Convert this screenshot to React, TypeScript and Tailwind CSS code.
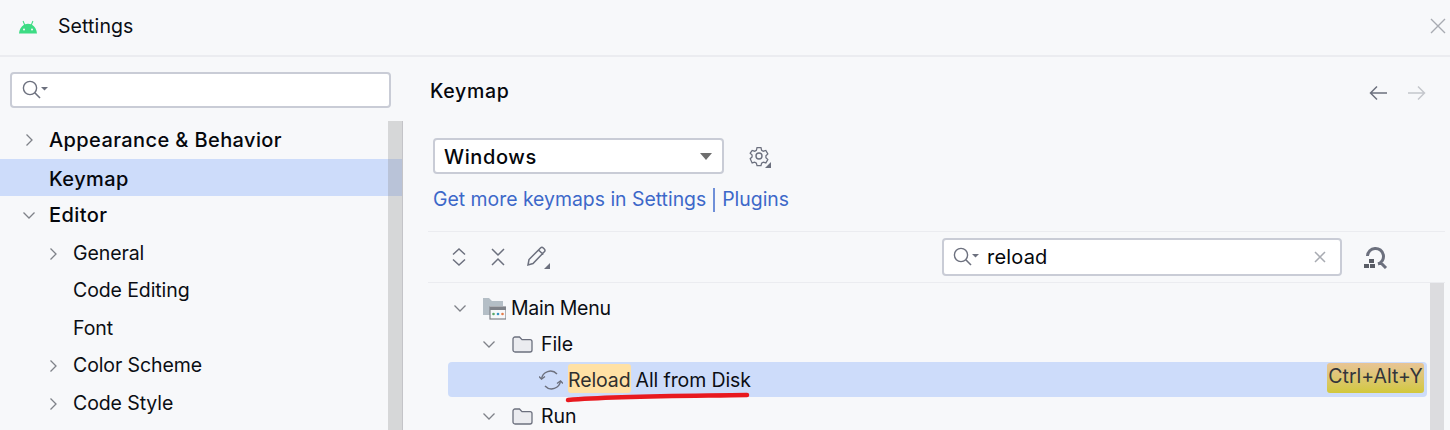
import React from 'react';

const font = { fontFamily: 'Inter, "Noto Sans", sans-serif' };

const Chevron = ({ open, className = '' }: { open?: boolean; className?: string }) => (
  <svg width="16" height="16" viewBox="0 0 16 16" fill="none" stroke="#7f8289" strokeWidth="1.3" className={className}>
    {open ? <path d="M2.5 5.5 8 11l5.5-5.5" /> : <path d="M5.5 2.5 11 8l-5.5 5.5" />}
  </svg>
);

const SearchIcon = () => (
  <svg width="28" height="22" viewBox="0 0 28 22" fill="none" className="shrink-0">
    <circle cx="9" cy="9" r="6.6" stroke="#6c707e" strokeWidth="1.4" />
    <path d="M13.8 13.8 19 19" stroke="#6c707e" strokeWidth="1.6" />
    <path d="M20 8h7l-3.5 3.6z" fill="#6c707e" />
  </svg>
);

const Corner = () => <span className="absolute right-0 bottom-0 w-0 h-0 border-l-[6px] border-l-transparent border-b-[6px] border-b-[#6c707e]" />;

const Folder = () => (
  <svg width="21" height="19" viewBox="0 0 21 19" fill="#ebecf0" stroke="#6c707e" strokeWidth="1.3" className="shrink-0">
    <path d="M1 4a2 2 0 0 1 2-2h4.500l2.500 2.600h8a2 2 0 0 1 2 2V15a2 2 0 0 1-2 2H3a2 2 0 0 1-2-2z" />
  </svg>
);

const SideRow = ({ label, depth, arrow, selected }: { label: string; depth: 0 | 1; arrow?: 'open' | 'closed'; selected?: boolean }) => (
  <div className={`flex items-center odd:h-[38px] even:h-[37px] even:pt-[2px] ${selected ? 'bg-[#cddcfa]' : ''} ${depth === 0 ? 'pl-[21px] font-medium tracking-[0.4px]' : 'odd:pt-[2px] pl-[45px] tracking-[-0.1px]'}`}>
    <span className="w-[28px] shrink-0">{arrow && <Chevron open={arrow === 'open'} />}</span>
    <span className={depth === 0 ? 'text-[20px] text-[#05070c]' : 'text-[19.5px] text-[#0b0e14]'}>{label}</span>
  </div>
);

export default function App() {
  return (
    <div className="w-[1450px] h-[430px] overflow-hidden bg-[#f7f8fa] text-[#0b0e14] flex flex-col" style={font}>
      {/* title bar */}
      <header className="h-[57px] shrink-0 border-b-2 border-[#ebecf0] flex items-center pl-[19px] pr-[4px]">
        <svg width="18" height="14" viewBox="0 0 18 14" fill="#3ddc84" className="shrink-0 mt-[-2px]">
          <path d="M0 13.5C.3 9.6 2.2 6.4 5 4.8L3.6 1.2l.9-.4L6 4.3a8.6 8.6 0 0 1 6 0L13.500.8l.9.4L13 4.800c2.800 1.600 4.700 4.800 5 8.700z" />
          <circle cx="5" cy="9.500" r="1" fill="#f7f8fa" />
          <circle cx="13" cy="9.500" r="1" fill="#f7f8fa" />
        </svg>
        <span className="ml-[21px] text-[19.500px] tracking-[0.1px] mt-[-2px]">Settings</span>
        <svg width="16" height="16" viewBox="0 0 16 16" stroke="#a8abb2" strokeWidth="1.400" className="ml-auto mt-[-3px]">
          <path d="M1 1l14 14M15 1 1 15" />
        </svg>
      </header>

      <div className="flex flex-1 min-h-0">
        {/* left tree */}
        <aside className="w-[403px] shrink-0 relative">
          <div className="mx-[10px] mt-[15px] h-[36px] w-[381px] bg-white border-2 border-[#c9ccd6] rounded-[4px] flex items-center pl-[9px]">
            <SearchIcon />
          </div>
          <div className="mt-[13px]">
            <SideRow label="Appearance & Behavior" depth={0} arrow="closed" />
            <SideRow label="Keymap" depth={0} selected />
            <SideRow label="Editor" depth={0} arrow="open" />
            <SideRow label="General" depth={1} arrow="closed" />
            <SideRow label="Code Editing" depth={1} />
            <SideRow label="Font" depth={1} />
            <SideRow label="Color Scheme" depth={1} arrow="closed" />
            <SideRow label="Code Style" depth={1} arrow="closed" />
          </div>
          {/* scrollbar */}
          <div className="absolute left-[388px] top-[64px] bottom-0 w-[15px] bg-[#8c8c8c]/30 border-r border-[#c4c4c8]" />
        </aside>

        {/* right content */}
        <main className="flex-1 min-w-0 relative">
          <div className="flex items-center h-[26px] mt-[21px] pl-[27px] pr-[24px]">
            <h1 className="text-[19.500px] font-medium tracking-[0.7px] text-[#05070c] mt-[2px]">Keymap</h1>
            <div className="ml-auto flex items-center gap-[21px] mt-[3px]">
              <svg width="18" height="16" viewBox="0 0 18 16" fill="none" stroke="#6c707e" strokeWidth="1.500"><path d="M18 8H1.500M8 1.500 1.500 8 8 14.500" /></svg>
              <svg width="18" height="16" viewBox="0 0 18 16" fill="none" stroke="#c4c6cc" strokeWidth="1.500"><path d="M0 8h16.500M10 1.500 16.500 8 10 14.500" /></svg>
            </div>
          </div>

          <div className="flex items-center mt-[34px] pl-[30px]">
            <div className="w-[291px] h-[36px] bg-white border-2 border-[#c9ccd6] rounded-[4px] flex items-center pl-[9px] pr-[10px]">
              <span className="text-[20px] font-medium tracking-[0.6px] text-[#05070c] mt-[2px]">Windows</span>
              <span className="ml-auto w-0 h-0 border-x-[6.500px] border-x-transparent border-t-[7px] border-t-[#6e6e6e]" />
            </div>
            <span className="relative ml-[23px] w-[24px] h-[24px] flex items-center justify-center">
              <svg width="22" height="22" viewBox="0 0 22 22" fill="none" stroke="#6c707e" strokeWidth="1.400">
                <path d="M8.800 1.800h4.400l.7 2.800 1.900 1.100 2.800-.8 2.200 3.800-2.100 2 0 2.200 2.100 2-2.200 3.800-2.800-.8-1.900 1.100-.7 2.800H8.800l-.7-2.800-1.900-1.100-2.800.8L1.200 14l2.100-2v-2.200l-2.100-2L3.400 4.900l2.800.8 1.900-1.100z" transform="translate(1.100 1.100) scale(.9)" />
                <circle cx="11" cy="11" r="3" />
              </svg>
              <Corner />
            </span>
          </div>

          <div className="flex items-center mt-[11px] pl-[30px] h-[30px] text-[19.400px] text-[#3d68c9]">
            <span>Get more keymaps in Settings</span>
            <span className="mx-[7px] w-[2px] h-[24px] bg-[#6f8fd8]" />
            <span>Plugins</span>
          </div>

          <div className="ml-[25px] mr-[5px] mt-[16px] h-[52px] border-y border-[#ebecf0] flex items-center pl-[22px] pr-[57px]">
            <svg width="18" height="20" viewBox="0 0 18 20" fill="none" stroke="#6c707e" strokeWidth="1.500" className="shrink-0">
              <path d="M3 7.500 9 2l6 5.500M3 12.500 9 18l6-5.500" />
            </svg>
            <svg width="18" height="20" viewBox="0 0 18 20" fill="none" stroke="#6c707e" strokeWidth="1.500" className="shrink-0 ml-[21px]">
              <path d="M3 2 9 8l6-6M3 18l6-6 6 6" />
            </svg>
            <span className="relative ml-[19px] w-[24px] h-[24px] shrink-0">
              <svg width="22" height="22" viewBox="0 0 22 22" fill="none" stroke="#6c707e" strokeWidth="1.500">
                <path d="M2 20l1-5.500L14.500 3a2 2 0 0 1 2.800 0l1 1a2 2 0 0 1 0 2.800L7 18.500zM12.500 5l4.800 4.500" />
              </svg>
              <Corner />
            </span>
            <div className="ml-auto w-[400px] h-[38px] bg-white border-2 border-[#c9ccd6] rounded-[4px] flex items-center pl-[8px] pr-[14px] mb-[1px]">
              <SearchIcon />
              <span className="ml-[7px] text-[20px] tracking-[0.2px] text-[#05070c]">reload</span>
              <svg width="12" height="12" viewBox="0 0 12 12" stroke="#a8abb2" strokeWidth="1.500" className="ml-auto"><path d="M1 1l10 10M11 1 1 11" /></svg>
            </div>
            <svg width="24" height="24" viewBox="0 0 24 24" fill="none" className="ml-[22px] shrink-0">
              <path d="M3.500 11a8 8 0 1 1 10.500 8M15.500 16.500 22 23" stroke="#6c707e" strokeWidth="3" />
              <path d="M5 14h5v4H5zM0 19h5v4H0zM6 19h5v4H6z" fill="#5a5d66" />
            </svg>
          </div>

          {/* keymap tree */}
          <div className="relative mt-[7px] pl-[45px] text-[19.500px] tracking-[-0.1px]">
            <div className="h-[36px] flex items-center pl-[2px]">
              <Chevron open className="ml-[2px]" />
              <svg width="24" height="24" viewBox="0 0 24 24" className="ml-[14px] shrink-0">
                <path d="M1 2h6l3 3h11v5H8v9H1z" fill="#b4bec6" />
                <rect x="8" y="11" width="16" height="12" fill="#f7f8fa" stroke="#7f8289" strokeWidth="1.200" />
                <rect x="8" y="11" width="16" height="3" fill="#7f8289" />
                <circle cx="11.500" cy="18" r="1.300" fill="#59a869" />
                <circle cx="16" cy="18" r="1.300" fill="#3592c4" />
                <circle cx="20.500" cy="18" r="1.300" fill="#e57c4a" />
              </svg>
              <span className="ml-[5px] tracking-[-0.3px] mt-[2px]">Main Menu</span>
            </div>
            <div className="h-[36px] flex items-center pl-[33px]">
              <Chevron open />
              <span className="ml-[15px]"><Folder /></span>
              <span className="ml-[8px] mt-[2px]">File</span>
            </div>
            <div className="h-[35px] mb-[1px] mr-[23px] bg-[#cddcfa] rounded-[4px] flex items-center pl-[91px] pr-[3px]">
              <svg width="24" height="22" viewBox="0 0 24 22" fill="none" stroke="#6c707e" strokeWidth="1.400" className="shrink-0">
                <path d="M2.500 10A9 9 0 0 1 18 5M21.500 12A9 9 0 0 1 6 17" />
                <path d="M0 7.500 2.500 10 6 7.500M18 14.500l3.500-2.500 2.500 2.500" />
              </svg>
              <span className="ml-[5px] h-[29px] mb-[2px] pt-[4px] flex items-center bg-[#ffe1a5] rounded-[3px] text-[#2f2f2f]">Reload</span>
              <span className="ml-[5px] mt-[2px]">All from Disk</span>
              <span className="ml-auto h-[30px] mb-[3px] pb-[3px] w-[97px] flex items-center justify-center rounded-[3px] bg-linear-to-b from-[#e8c495] to-[#d2c83a] text-[#33353a] text-[19.500px] tracking-[0px]">Ctrl+Alt+Y</span>
            </div>
            <div className="h-[36px] flex items-center pl-[33px]">
              <Chevron open />
              <span className="ml-[15px]"><Folder /></span>
              <span className="ml-[8px] mt-[2px]">Run</span>
            </div>
            {/* red annotation stroke under the selected item */}
            <svg width="200" height="14" viewBox="0 0 200 14" fill="none" className="absolute left-[162px] top-[100px]">
              <path d="M3 10C50 6 120 6 182 5" stroke="#e8191f" strokeWidth="4.500" strokeLinecap="round" />
            </svg>
            {/* tree scrollbar */}
            <div className="absolute left-[1027px] top-[-7px] bottom-0 w-[14px] bg-[#dcdcdf]" />
          </div>
        </main>
      </div>
    </div>
  );
}
